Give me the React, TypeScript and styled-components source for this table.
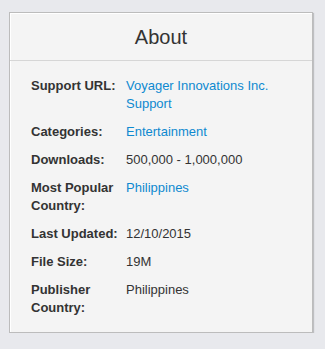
import React from "react";
import styled, { createGlobalStyle } from "styled-components";

const GlobalStyle = createGlobalStyle`
  html, body {
    margin: 0;
    padding: 0;
    background-color: #e8e9ed;
    font-family: "Liberation Sans", Arial, sans-serif;
  }
`;

const Page = styled.div`
  padding: 12px 0 0 9px;
`;

const Card = styled.section`
  width: 304px;
  box-sizing: border-box;
  background-color: #f4f4f4;
  border: 1px solid #bcbcbc;
  box-shadow: inset 1px 1px 0 #ffffff, 1px 1px 1px rgba(0, 0, 0, 0.18);
`;

const CardHeader = styled.h2`
  margin: 0;
  padding: 13px 0 11px;
  line-height: 23px;
  font-size: 20px;
  font-weight: normal;
  text-align: center;
  color: #333333;
  border-bottom: 1px solid #d6d6d6;
`;

const InfoList = styled.dl`
  margin: 0;
  padding: 16px 21px 15px 21px;
  display: grid;
  grid-template-columns: 90px 1fr;
  column-gap: 5px;
  row-gap: 10px;
  font-size: 13px;
  line-height: 18px;
`;

const Label = styled.dt`
  margin: 0;
  font-weight: bold;
  color: #333333;
`;

const Value = styled.dd<{ $link?: boolean }>`
  margin: 0;
  color: ${(p) => (p.$link ? "#0e89d0" : "#333333")};
`;

interface InfoRow {
  label: string;
  value: string;
  link?: boolean;
}

const rows: InfoRow[] = [
  { label: "Support URL:", value: "Voyager Innovations Inc. Support", link: true },
  { label: "Categories:", value: "Entertainment", link: true },
  { label: "Downloads:", value: "500,000 - 1,000,000" },
  { label: "Most Popular Country:", value: "Philippines", link: true },
  { label: "Last Updated:", value: "12/10/2015" },
  { label: "File Size:", value: "19M" },
  { label: "Publisher Country:", value: "Philippines" },
];

export default function App() {
  return (
    <Page>
      <GlobalStyle />
      <Card>
        <CardHeader>About</CardHeader>
        <InfoList>
          {rows.map((row) => (
            <React.Fragment key={row.label}>
              <Label>{row.label}</Label>
              <Value $link={row.link}>{row.value}</Value>
            </React.Fragment>
          ))}
        </InfoList>
      </Card>
    </Page>
  );
}
